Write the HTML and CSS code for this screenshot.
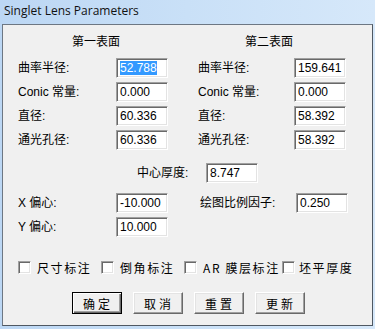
FILE: index.html
```html
<!DOCTYPE html>
<html>
<head>
<meta charset="utf-8">
<link rel="stylesheet" href="styles.css">
</head>
<body>
<div class="window">
  <div class="titlebar">Singlet Lens Parameters</div>
  <div class="client">
    <div class="surfaces">
      <div class="heading h1">第一表面</div>
      <div></div>
      <div class="heading h2">第二表面</div>

      <div class="label">曲率半径:</div><div class="field"><span class="sel">52.788</span></div><div></div>
      <div class="label">曲率半径:</div><div class="field">159.641</div>

      <div class="label">Conic 常量:</div><div class="field">0.000</div><div></div>
      <div class="label">Conic 常量:</div><div class="field">0.000</div>

      <div class="label">直径:</div><div class="field">60.336</div><div></div>
      <div class="label">直径:</div><div class="field">58.392</div>

      <div class="label">通光孔径:</div><div class="field">60.336</div><div></div>
      <div class="label">通光孔径:</div><div class="field">58.392</div>
    </div>

    <div class="center-row">
      <div class="label center-label">中心厚度:</div>
      <div class="field">8.747</div>
    </div>

    <div class="offsets">
      <div class="label">X 偏心:</div><div class="field">-10.000</div><div></div>
      <div class="label scale-label">绘图比例因子:</div><div class="field">0.250</div>
      <div class="label">Y 偏心:</div><div class="field">10.000</div>
    </div>

    <div class="checks">
      <div class="check"><span class="box"></span><span class="ctext">尺寸标注</span></div>
      <div class="check"><span class="box"></span><span class="ctext">倒角标注</span></div>
      <div class="check"><span class="box"></span><span class="ctext">AR 膜层标注</span></div>
      <div class="check last"><span class="box"></span><span class="ctext">坯平厚度</span></div>
    </div>

    <div class="buttons">
      <div class="btn default"><span>确定</span></div>
      <div class="btn"><span>取消</span></div>
      <div class="btn"><span>重置</span></div>
      <div class="btn"><span>更新</span></div>
    </div>
  </div>
</div>
</body>
</html>
```

FILE: styles.css
```css
* { box-sizing: border-box; }
html, body { margin: 0; padding: 0; }
body {
  width: 375px;
  height: 329px;
  overflow: hidden;
  font-family: "Liberation Sans", "Noto Sans CJK SC", sans-serif;
  font-size: 12px;
  color: #000;
}
.window {
  width: 375px;
  height: 329px;
  background: linear-gradient(90deg, #bcd7f4 0%, #c9e0f7 50%, #d6e8fa 100%);
  display: flex;
  flex-direction: column;
}
.titlebar {
  height: 24px;
  padding: 3px 0 0 4px;
  font-family: "Open Sans", "Liberation Sans", sans-serif;
  font-size: 12px;
  line-height: 15px;
  color: #111;
}
.client {
  margin: 0 2px;
  height: 302px;
  background: #f0f0f0;
  border: 1px solid #6d7783;
  border-right-color: #4f5862;
  border-bottom-color: #4f5862;
  padding: 9px 0 0 15px;
  font-family: "Liberation Sans", "Noto Sans CJK SC", sans-serif;
}
.surfaces {
  display: grid;
  grid-template-columns: 98px 52px 30px 96px 52px;
  grid-auto-rows: 20px;
  row-gap: 4px;
  align-items: center;
}
.heading {
  grid-column: span 2;
  font-family: "Noto Sans CJK SC", sans-serif;
  font-size: 12px;
  line-height: 14px;
  align-self: start;
  height: 27px;
}
.h1 { padding-left: 54px; }
.h2 { padding-left: 47px; }
.surfaces > .heading:first-child ~ div { }
.label {
  font-family: "Liberation Sans", "Noto Sans CJK SC", sans-serif;
  font-size: 12px;
  line-height: 14px;
  white-space: nowrap;
}
.field {
  height: 20px;
  width: 52px;
  background: #fff;
  border: 1px solid;
  border-color: #a0a0a0 #fff #fff #a0a0a0;
  box-shadow: inset 1px 1px 0 #696969, inset -1px -1px 0 #e3e3e3;
  padding: 2px 0 0 3px;
  font-family: "Liberation Sans", sans-serif;
  font-size: 12px;
  line-height: 14px;
  white-space: nowrap;
}
.sel {
  background: #3399ff;
  color: #fff;
  display: inline-block;
  height: 14px;
}
.center-row {
  display: flex;
  align-items: center;
  margin-top: 13px;
  padding-left: 119px;
}
.center-label { width: 69px; }
.offsets {
  display: grid;
  grid-template-columns: 98px 52px 32px 96px 52px;
  grid-auto-rows: 20px;
  row-gap: 4px;
  align-items: center;
  margin-top: 10px;
}
.checks {
  display: grid;
  grid-template-columns: 83px 83px 98px auto;
  margin-top: 24px;
  height: 13px;
  align-items: center;
}
.check {
  display: flex;
  align-items: center;
  height: 13px;
}
.box {
  width: 13px;
  height: 13px;
  background: #fff;
  border: 1px solid;
  border-color: #a0a0a0 #fff #fff #a0a0a0;
  box-shadow: inset 1px 1px 0 #696969, inset -1px -1px 0 #e3e3e3;
  flex: none;
}
.ctext {
  margin-left: 6px;
  font-family: "Noto Sans CJK SC", sans-serif;
  font-size: 12px;
  line-height: 14px;
  letter-spacing: 1.6px;
  white-space: nowrap;
}
.check.last .ctext { margin-left: 4px; }
.buttons {
  display: flex;
  justify-content: center;
  gap: 11px;
  margin-top: 18px;
  margin-left: -14px;
}
.btn {
  width: 50px;
  height: 22px;
  background: #f0f0f0;
  border: 1px solid;
  border-color: #fff #696969 #696969 #fff;
  box-shadow: inset -1px -1px 0 #a0a0a0, inset 1px 1px 0 #e3e3e3;
  display: flex;
  align-items: center;
  justify-content: center;
  font-family: "Noto Sans CJK SC", sans-serif;
  font-size: 12px;
  letter-spacing: 3px;
}
.btn span { margin-right: -3px; }
.btn.default {
  border: 1px solid #000;
  box-shadow: inset 1px 1px 0 #fff, inset -1px -1px 0 #696969, inset -2px -2px 0 #a0a0a0;
}
```
